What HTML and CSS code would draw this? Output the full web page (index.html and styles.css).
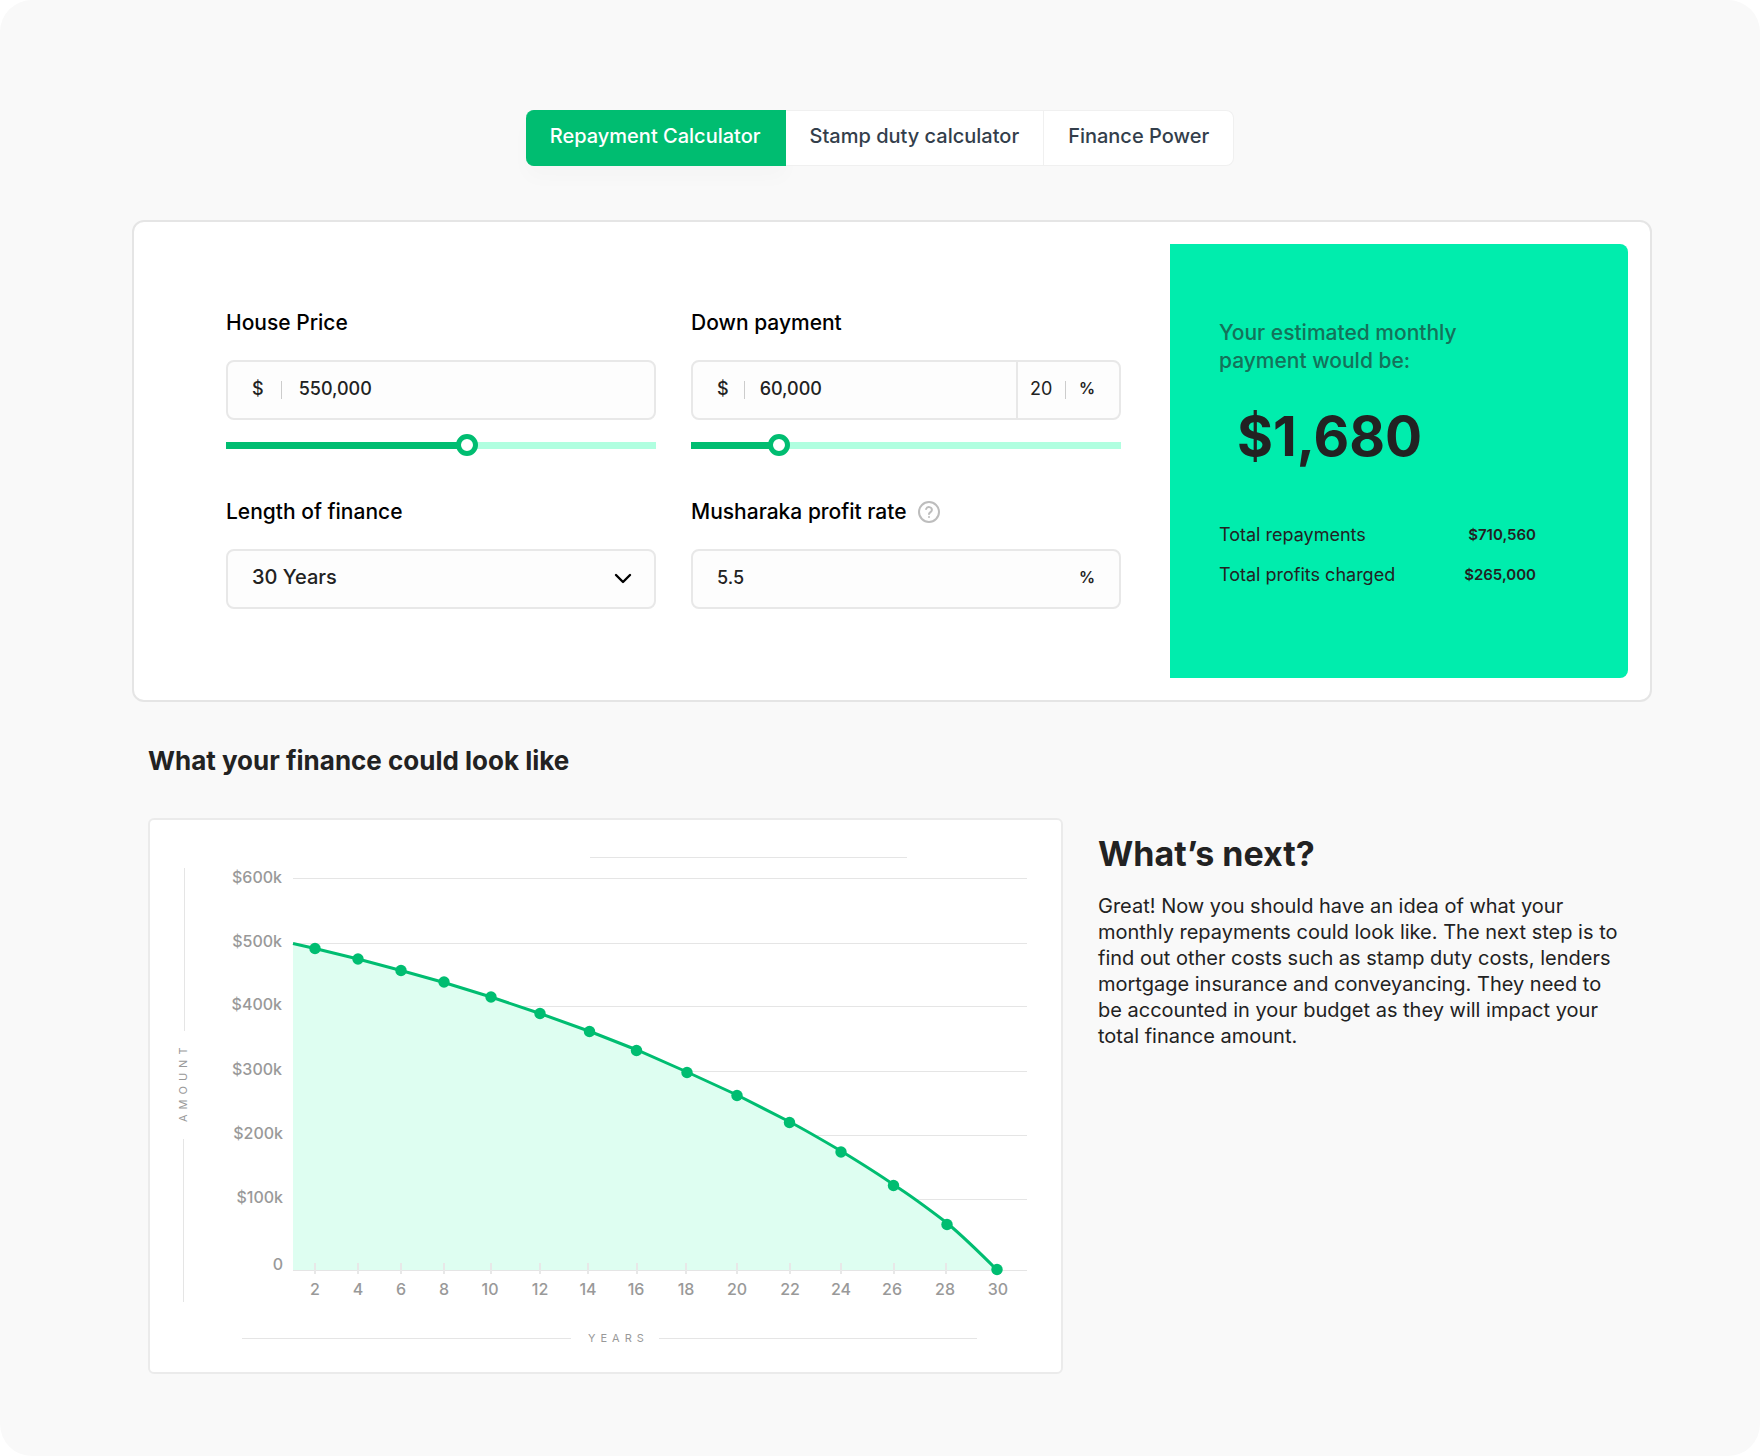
FILE: index.html
```html
<!DOCTYPE html>
<html lang="en">
<head>
    <meta charset="UTF-8">
    <meta name="viewport" content="width=device-width, initial-scale=1.0">
    <title>Repayment Calculator</title>
    <link rel="stylesheet" href="styles.css">
</head>
<body>
    <main class="page">
        <nav class="tabs">
            <button class="tab active" type="button">Repayment Calculator</button>
            <button class="tab" type="button">Stamp duty calculator</button>
            <button class="tab" type="button">Finance Power</button>
        </nav>

        <section class="calculator">
            <form class="form">
                <div class="group">
                    <label class="label" for="price">House Price</label>
                    <div class="field">
                        <span class="unit">$</span>
                        <span class="divider"></span>
                        <input class="value" id="price" type="text" value="550,000">
                    </div>
                    <input class="slider" type="range" min="0" max="975000" step="1000" value="550000" style="--fill: 56%" aria-label="House price slider">
                </div>

                <div class="group">
                    <label class="label" for="down">Down payment</label>
                    <div class="field split">
                        <span class="unit">$</span>
                        <span class="divider"></span>
                        <input class="value" id="down" type="text" value="60,000">
                        <div class="percent">
                            <input class="percent-value" type="text" value="20" aria-label="Down payment percent">
                            <span class="divider"></span>
                            <span class="unit percent-sign">%</span>
                        </div>
                    </div>
                    <input class="slider" type="range" min="0" max="320000" step="1000" value="60000" style="--fill: 20%" aria-label="Down payment slider">
                </div>

                <div class="group">
                    <label class="label" for="length">Length of finance</label>
                    <div class="field select-field">
                        <select class="select" id="length">
                            <option>30 Years</option>
                            <option>25 Years</option>
                            <option>20 Years</option>
                        </select>
                        <svg class="chevron" width="18" height="12" viewBox="0 0 18 12">
                            <path d="M2 2l7 7 7-7" fill="none" stroke="#000" stroke-width="2.4" stroke-linecap="round" stroke-linejoin="round"/>
                        </svg>
                    </div>
                </div>

                <div class="group">
                    <div class="label">
                        <label for="rate">Musharaka profit rate</label>
                        <button class="help" type="button" aria-label="Help">
                            <svg width="24" height="24" viewBox="0 0 24 24" fill="none" stroke="#bdbdbd" stroke-width="2" stroke-linecap="round" stroke-linejoin="round">
                                <circle cx="12" cy="12" r="10"/>
                                <path d="M9.1 9a3 3 0 0 1 5.8 1c0 2-2.9 2.6-2.9 4"/>
                                <path d="M12 17h.01"/>
                            </svg>
                        </button>
                    </div>
                    <div class="field">
                        <input class="value" id="rate" type="text" value="5.5">
                        <span class="unit percent-sign">%</span>
                    </div>
                </div>
            </form>

            <div class="result">
                <p class="result-text">Your estimated monthly<br>payment would be:</p>
                <p class="amount">$1,680</p>
                <dl class="totals">
                    <div class="total">
                        <dt>Total repayments</dt>
                        <dd>$710,560</dd>
                    </div>
                    <div class="total">
                        <dt>Total profits charged</dt>
                        <dd>$265,000</dd>
                    </div>
                </dl>
            </div>
        </section>

        <h2 class="chart-title">What your finance could look like</h2>

        <section class="bottom">
            <div class="chart">
                <svg viewBox="0 0 911 552">
                    <!-- grid -->
                    <g class="grid">
                        <path d="M440 37.5H757"/>
                        <path d="M143 58.5H877M143 123.5H877M143 186.5H877M143 251.5H877M143 315.5H877M143 379.5H877"/>
                    </g>

                    <!-- balance curve -->
                    <path class="area" d="M143 123.5L165 128.5L208 139L251 150.5L294 162.5L341 177L390 193.5L440 211.5L487 230L537 252L587 275L640 302C657 311 674 321 691 331C709 342 727 353 744 365C763 377 780 390 797 403C815 418 831 434 847 450H143Z"/>
                    <path class="grid" d="M143 450.5H877"/>
                    <path class="ticks" d="M165 443V454M208 443V454M251 443V454M294 443V454M341 443V454M390 443V454M438 443V454M487 443V454M536 443V454M587 443V454M640 443V454M691 443V454M744 443V454M796 443V454"/>
                    <path class="curve" d="M143 123.5L165 128.5L208 139L251 150.5L294 162.5L341 177L390 193.5L440 211.5L487 230L537 252L587 275L640 302C657 311 674 321 691 331C709 342 727 353 744 365C763 377 780 390 797 403C815 418 831 434 847 450"/>
                    <g class="dots">
                        <circle cx="165" cy="128.5" r="5.7"/>
                        <circle cx="208" cy="139" r="5.7"/>
                        <circle cx="251" cy="150.5" r="5.7"/>
                        <circle cx="294" cy="162" r="5.7"/>
                        <circle cx="341" cy="177" r="5.7"/>
                        <circle cx="390" cy="193.5" r="5.7"/>
                        <circle cx="439.5" cy="211.5" r="5.7"/>
                        <circle cx="486.5" cy="230.5" r="5.7"/>
                        <circle cx="537" cy="252.5" r="5.7"/>
                        <circle cx="587" cy="275.5" r="5.7"/>
                        <circle cx="639.5" cy="302.5" r="5.7"/>
                        <circle cx="691" cy="332" r="5.7"/>
                        <circle cx="743.5" cy="365.5" r="5.7"/>
                        <circle cx="797" cy="404.5" r="5.7"/>
                        <circle cx="847" cy="449.5" r="5.7"/>
                    </g>

                    <!-- scale labels -->
                    <g class="scale scale-y">
                        <text x="132" y="63">$600k</text>
                        <text x="132" y="127">$500k</text>
                        <text x="132" y="190">$400k</text>
                        <text x="132" y="255">$300k</text>
                        <text x="133" y="319">$200k</text>
                        <text x="133" y="383">$100k</text>
                        <text x="133" y="450">0</text>
                    </g>
                    <g class="scale scale-x">
                        <text x="165" y="475">2</text>
                        <text x="208" y="475">4</text>
                        <text x="251" y="475">6</text>
                        <text x="294" y="475">8</text>
                        <text x="340" y="475">10</text>
                        <text x="390" y="475">12</text>
                        <text x="438" y="475">14</text>
                        <text x="486" y="475">16</text>
                        <text x="536" y="475">18</text>
                        <text x="587" y="475">20</text>
                        <text x="640" y="475">22</text>
                        <text x="691" y="475">24</text>
                        <text x="742" y="475">26</text>
                        <text x="795" y="475">28</text>
                        <text x="848" y="475">30</text>
                    </g>

                    <!-- axis titles -->
                    <path class="grid" d="M34.5 48V211M33.5 319V482M92 518.5H421M509 518.5H827"/>
                    <text class="axis" transform="translate(37 302) rotate(-90)">AMOUNT</text>
                    <text class="axis" x="438" y="522">YEARS</text>
                </svg>
            </div>

            <aside class="next">
                <h2 class="next-title">What’s next?</h2>
                <p class="next-text">Great! Now you should have an idea of what your monthly repayments could look like. The next step is to find out other costs such as stamp duty costs, lenders mortgage insurance and conveyancing. They need to be accounted in your budget as they will impact your total finance amount.</p>
            </aside>
        </section>
    </main>
</body>
</html>
```
FILE: styles.css
```css
* {
    box-sizing: border-box;
}

body {
    margin: 0;
    background-color: #fff;
    font-family: Inter, "Open Sans", sans-serif;
    color: #222;
}

h2, p, dl, dd {
    margin: 0;
}

input, select, button {
    font-family: inherit;
    color: inherit;
}

.page {
    min-height: 100vh;
    padding: 110px 108px 80px 132px;
    background-color: #f9f9f9;
    border-radius: 32px;
}

/* tabs */
.tabs {
    display: flex;
    justify-content: center;
    margin: 0 24px 54px 0;
}

.tab {
    padding: 13px 24px 17px;
    border: 1px solid #f0f0f0;
    border-left: 0;
    background-color: #fff;
    font-size: 20px;
    font-weight: 500;
    line-height: 24px;
    color: #333e4b;
    cursor: pointer;
}

.tab:last-child {
    border-radius: 0 8px 8px 0;
}

.tab.active {
    border-color: #00bd71;
    border-radius: 8px 0 0 8px;
    background-color: #00bd71;
    color: #fff;
    box-shadow: 0 12px 20px rgba(0, 0, 0, 0.02);
}

/* calculator */
.calculator {
    display: flex;
    gap: 49px;
    padding: 22px 22px 22px 92px;
    border: 2px solid #e5e5e5;
    border-radius: 12px;
    background-color: #fff;
}

.form {
    flex: 1;
    display: grid;
    grid-template-columns: 1fr 1fr;
    align-content: start;
    gap: 42px 35px;
    padding-top: 65px;
}

.group {
    min-width: 0;
}

.label {
    display: flex;
    align-items: center;
    gap: 10px;
    height: 28px;
    margin-bottom: 23px;
    font-size: 21px;
    font-weight: 500;
    line-height: 28px;
    color: #000;
}

.help {
    display: flex;
    padding: 0;
    border: 0;
    background: none;
    cursor: pointer;
}

.field {
    display: flex;
    align-items: center;
    height: 60px;
    padding: 0 24px;
    border: 2px solid #e8e8e8;
    border-radius: 8px;
    background-color: #fdfdfd;
    font-size: 18px;
    font-weight: 500;
}

.unit {
    padding-bottom: 4px;
}

.percent-sign {
    font-size: 16px;
    font-weight: 600;
}

.divider {
    width: 1px;
    height: 18px;
    margin: 0 17px;
    background-color: #ccc;
}

.value {
    flex: 1;
    min-width: 0;
    padding: 0 0 4px;
    border: 0;
    background: none;
    font-size: 18px;
    font-weight: 500;
}

.split .divider {
    margin: 0 15px;
}

.percent {
    display: flex;
    align-items: center;
    align-self: stretch;
    padding-left: 12px;
    border-left: 2px solid #e8e8e8;
}

.percent-value {
    width: 22px;
    padding: 0 0 4px;
    border: 0;
    background: none;
    font-size: 18px;
}

.percent .divider {
    margin: 0 13px;
}

.select-field {
    display: grid;
    padding: 0;
}

.select {
    grid-area: 1 / 1;
    width: 100%;
    height: 56px;
    padding: 0 24px 4px;
    border: 0;
    background: none;
    font-size: 20px;
    font-weight: 500;
    appearance: none;
}

.chevron {
    grid-area: 1 / 1;
    justify-self: end;
    margin-right: 22px;
    pointer-events: none;
}

.slider {
    display: block;
    width: 100%;
    height: 22px;
    margin: 14px 0 0;
    background: linear-gradient(to right, #00bd71 var(--fill), #b0ffe0 var(--fill)) center / 100% 7px no-repeat;
    appearance: none;
}

.slider::-webkit-slider-thumb {
    width: 22px;
    height: 22px;
    border: 5px solid #00bd71;
    border-radius: 50%;
    background-color: #fff;
    appearance: none;
}

/* result */
.result {
    flex: 0 0 458px;
    padding: 75px 92px 91px 49px;
    border-radius: 0 8px 8px 0;
    background-color: #00edad;
}

.result-text {
    font-size: 21px;
    font-weight: 500;
    line-height: 28px;
    color: #14725a;
}

.amount {
    margin: 29px 0 55px;
    padding-left: 18px;
    font-size: 55px;
    font-weight: 700;
    line-height: 64px;
}

.totals {
    display: grid;
    gap: 16px;
    font-size: 18px;
    line-height: 24px;
}

.total {
    display: flex;
    justify-content: space-between;
}

.total dd {
    font-size: 15px;
    font-weight: 600;
}

/* chart and text */
.chart-title {
    margin: 43px 0 41px 16px;
    font-size: 26px;
    font-weight: 700;
    line-height: 32px;
}

.bottom {
    display: grid;
    grid-template-columns: 915fr 525fr;
    align-items: start;
    gap: 35px;
    padding: 0 29px 0 16px;
}

.chart {
    border: 2px solid #ebebeb;
    border-radius: 6px;
    background-color: #fff;
}

.chart svg {
    display: block;
    width: 100%;
}

.grid {
    fill: none;
    stroke: #e5e5e5;
}

.ticks {
    stroke: #e8e8e8;
    stroke-width: 2;
}

.area {
    fill: #defef1;
}

.curve {
    fill: none;
    stroke: #00bd71;
    stroke-width: 3;
}

.dots {
    fill: #00bd71;
}

.scale {
    fill: #999;
    font-size: 16px;
    font-weight: 500;
}

.scale-y {
    text-anchor: end;
}

.scale-x {
    text-anchor: middle;
}

.axis {
    fill: #999;
    font-size: 11px;
    letter-spacing: 5px;
}

.next {
    padding-top: 16px;
}

.next-title {
    margin-bottom: 19px;
    font-size: 34px;
    font-weight: 700;
    line-height: 40px;
}

.next-text {
    font-size: 20px;
    line-height: 26px;
}
```
